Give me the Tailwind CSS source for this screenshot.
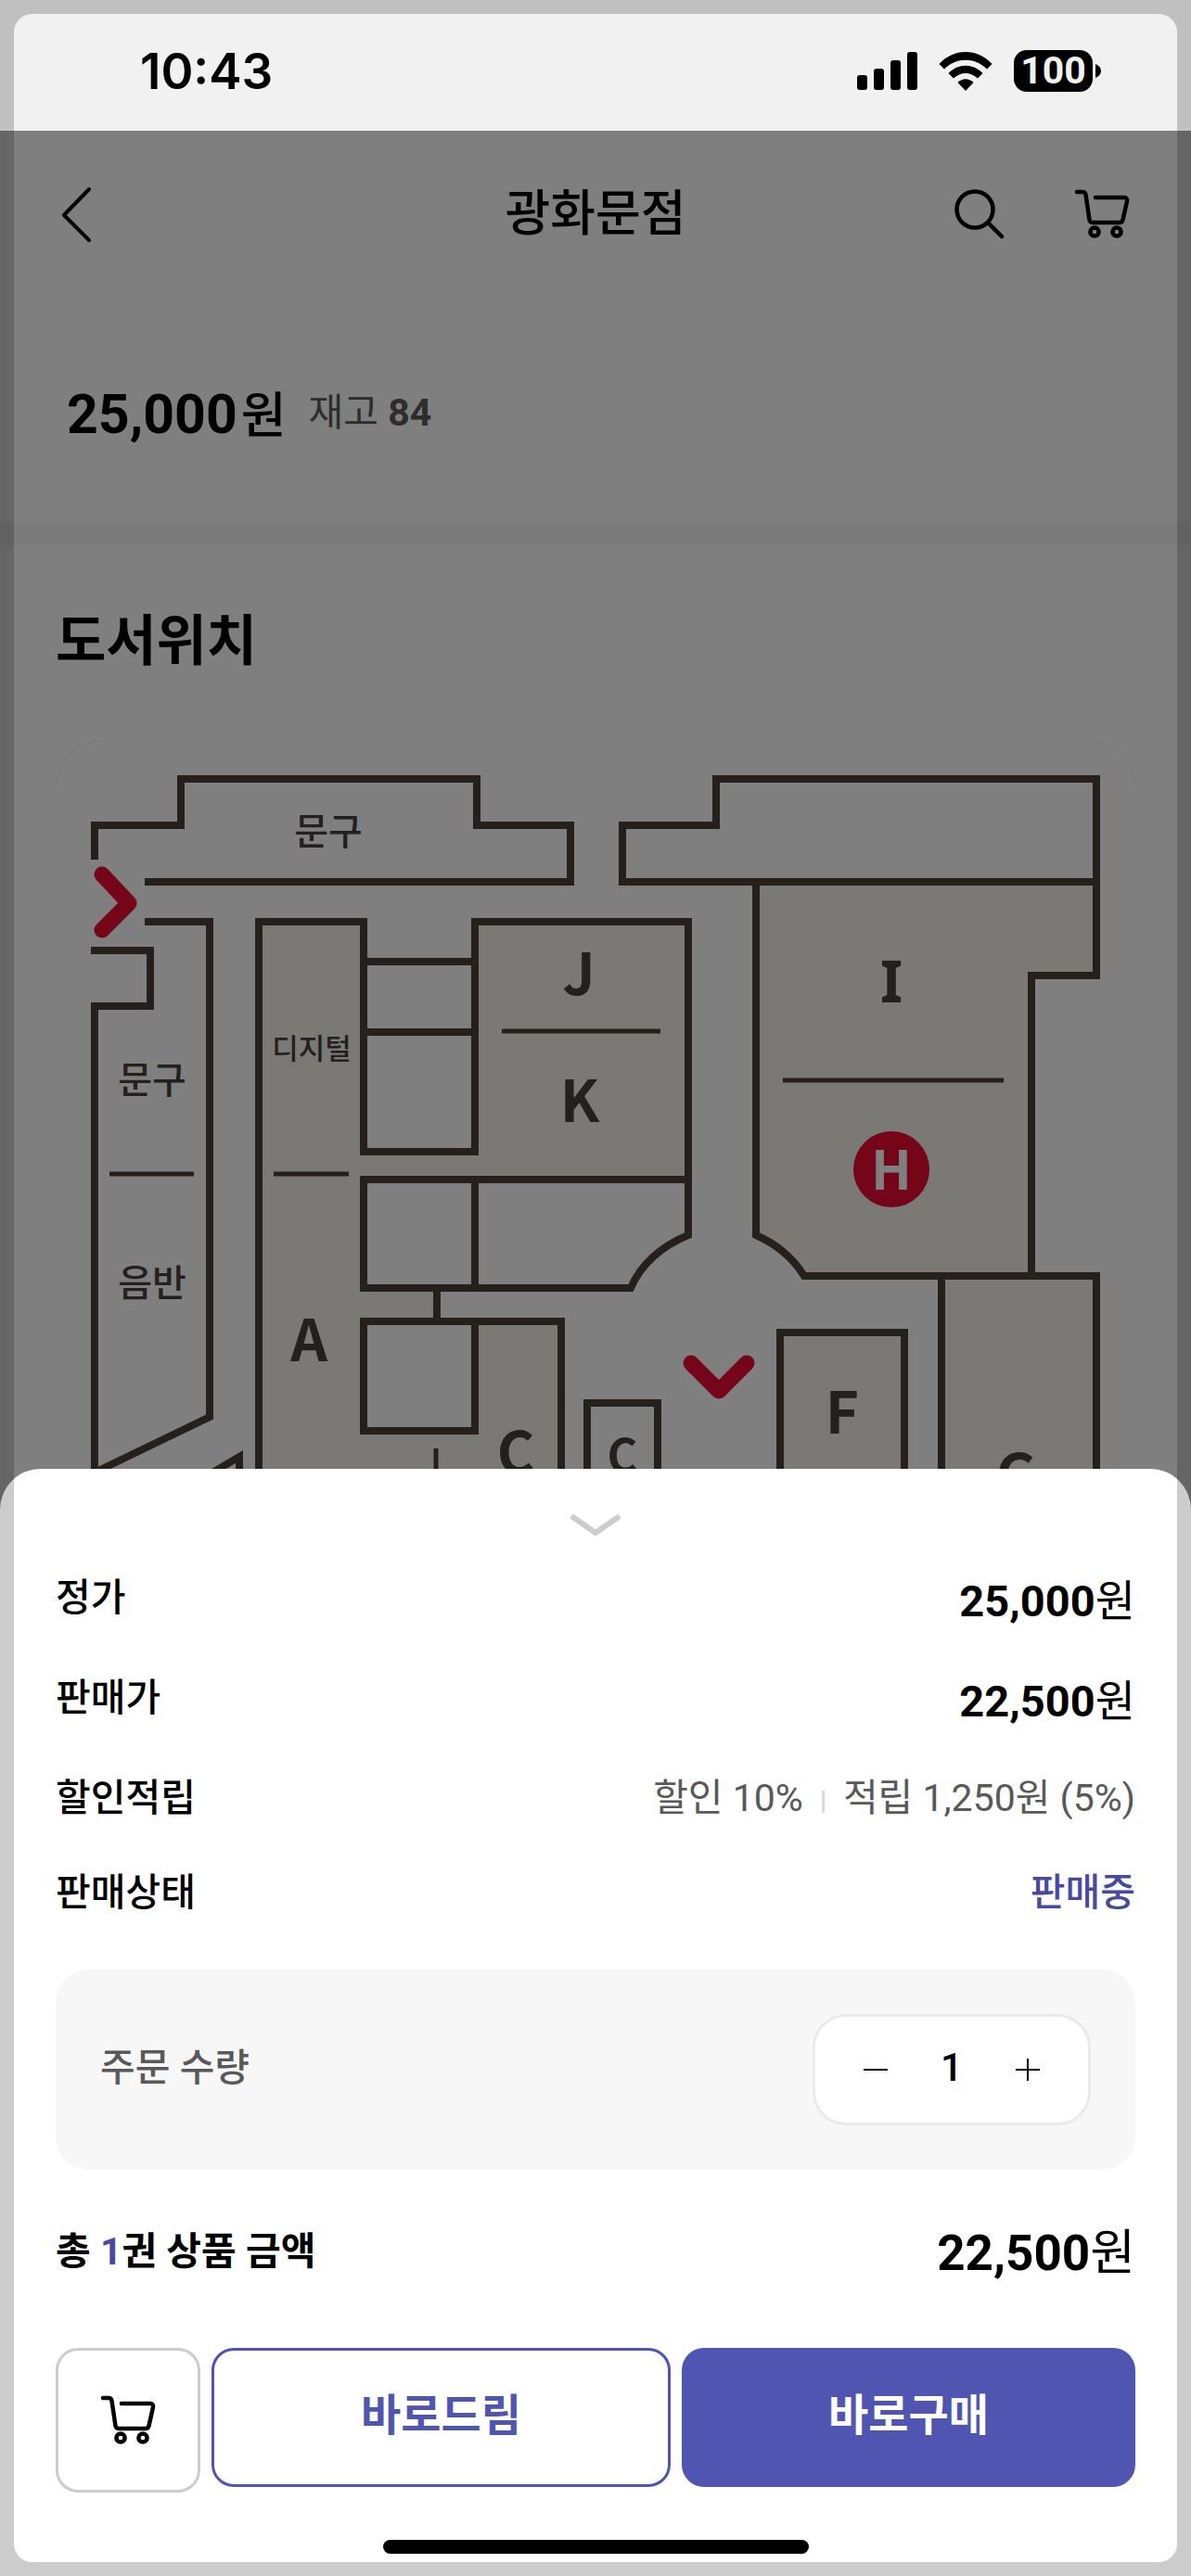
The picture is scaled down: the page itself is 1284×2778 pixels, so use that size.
<!DOCTYPE html>
<html lang="ko">
<head>
    <meta charset="UTF-8">
    <meta name="viewport" content="width=device-width, initial-scale=1.0">
    <title>광화문점</title>
    <!-- Tailwind CSS -->
    <script src="https://cdn.jsdelivr.net/npm/@tailwindcss/browser@4"></script>
</head>
<body class="relative flex h-screen flex-col overflow-hidden bg-white font-['Roboto','Noto_Sans_CJK_KR',sans-serif] text-black">
    <!-- Status Bar -->
    <div class="relative z-20 flex h-[141px] shrink-0 items-center justify-between bg-[#f1f1f1] pt-3 pr-[97px] pl-[151px]">
        <span class="font-['Inter',sans-serif] text-[53px] leading-[60px] font-semibold">10:43</span>
        <div class="flex items-center gap-[23px]">
            <svg class="h-[42px] w-[65px]" viewBox="0 0 65 42" aria-hidden="true">
                <rect x="0" y="25" width="11" height="16" rx="3"/>
                <rect x="18" y="18" width="11" height="23" rx="3"/>
                <rect x="36" y="9" width="11" height="32" rx="3"/>
                <rect x="54" y="0" width="11" height="41" rx="3"/>
            </svg>
            <svg class="h-[42px] w-[58px]" viewBox="0 0 58 42" aria-hidden="true">
                <path d="M0.5 13C16.500 -4.300 41.500 -4.300 57.500 13L52 18.500C39 5.500 19 5.500 6 18.500Z"/>
                <path d="M10.500 23C21 12 37 12 47.500 23L42 28.500C34.500 21 23.500 21 16 28.500Z"/>
                <path d="M20.500 33C25.500 28 32.500 28 37.500 33L29 42Z"/>
            </svg>
            <div class="flex items-center gap-[3px]">
                <span class="flex h-[45px] w-[85px] items-center justify-center rounded-[14px] bg-black text-[41px] leading-[45px] font-bold text-[#f1f1f1]">100</span>
                <svg class="h-[15px] w-[6px]" viewBox="0 0 6 15" aria-hidden="true">
                    <path d="M0 0C8 3 8 12 0 15Z"/>
                </svg>
            </div>
        </div>
    </div>

    <!-- Header -->
    <header class="grid h-[180px] shrink-0 grid-cols-[1fr_auto_1fr] items-center px-[60px]">
        <a href="#" aria-label="뒤로" class="justify-self-start px-[6px]">
            <svg class="h-[60px] w-[32px]" viewBox="0 0 32 60" fill="none" stroke="currentColor" stroke-width="4" stroke-linecap="round" stroke-linejoin="round" aria-hidden="true">
                <path d="M30 3L3 31L30 58"/>
            </svg>
        </a>
        <h1 class="text-[53px] leading-[60px] font-medium">광화문점</h1>
        <div class="flex items-center gap-[75px] justify-self-end pr-[6px]">
            <a href="#" aria-label="검색">
                <svg class="h-[56px] w-[54px]" viewBox="0 0 54 56" fill="none" stroke="currentColor" stroke-width="4.500" stroke-linecap="round" aria-hidden="true">
                    <circle cx="22" cy="23" r="19.500"/>
                    <path d="M37 38L51 52"/>
                </svg>
            </a>
            <a href="#" aria-label="장바구니">
                <svg class="h-[56px] w-[60px]" viewBox="0 0 60 56" fill="none" stroke="currentColor" stroke-width="4.500" stroke-linecap="round" stroke-linejoin="round" aria-hidden="true">
                    <path d="M3 4H9Q12 4 12.500 7L16.500 34Q17 37 20 37H49Q52 37 52.500 34L57 14Q57.500 10 54 10H23"/>
                    <circle cx="22" cy="47" r="4.600"/>
                    <circle cx="46" cy="47" r="4.600"/>
                </svg>
            </a>
        </div>
    </header>

    <!-- Price and Stock -->
    <section class="flex h-[243px] shrink-0 items-start gap-6 px-[72px] pt-[90px]">
        <p class="flex items-baseline gap-1 leading-[72px]">
            <strong class="text-[59px] font-bold">25,000</strong>
            <span class="text-[53px] font-medium">원</span>
        </p>
        <p class="text-[41px] leading-[68px] text-[#5a5a5a]">재고 <b class="font-bold">84</b></p>
    </section>
    <div class="h-6 shrink-0 bg-[#f6f6f6]"></div>

    <!-- Store Map -->
    <section class="px-[60px] pt-[66px]">
        <h2 class="text-[59px] leading-[76px] font-bold">도서위치</h2>
        <svg class="mt-[68px] block w-full" viewBox="60 798 1164 960" fill="none" stroke="#4a4038" stroke-width="8" role="img" aria-label="매장 지도">
            <!-- card corners -->
            <path d="M61 847A48 48 0 0 1 109 799M1175 799A48 48 0 0 1 1223 847" stroke="#eee" stroke-width="1"/>
            <!-- shaded zones -->
            <g fill="#f5f3ed" stroke="none">
                <path d="M279 994H392V1242H512V994H742V1272H392V1389H471V1425H605V1760H279Z"/>
                <path d="M815 951H1182V1052H1112V1376H867Q849 1345 815 1332Z"/>
                <path d="M1015 1376H1182V1760H1015Z"/>
                <path d="M841 1437H975V1760H841Z"/>
            </g>
            <path d="M392 1425H512V1543H392Z" fill="#fff"/>
            <!-- walls -->
            <path d="M102 927V890H195V840H514V890H615V951H156"/>
            <path d="M156 994H226V1528L102 1588"/>
            <path d="M98 1025H162V1085H102V1760"/>
            <path d="M226 1590L258 1571V1700"/>
            <path d="M279 1760V994H392V1242H512V994H742V1332C712 1344 690 1365 680 1389H392V1272H742"/>
            <path d="M392 1037H512M392 1113H512M512 1272V1389M471 1389V1425"/>
            <path d="M512 1425V1543H392V1425H605V1760"/>
            <path d="M633 1760V1513H709V1760"/>
            <path d="M815 951V1332C838 1342 855 1357 867 1376H1182V1760"/>
            <path d="M1182 951H671V890H772V840H1182V1052H1112V1376"/>
            <path d="M1015 1376V1760M841 1760V1437H975V1760"/>
            <!-- dividers -->
            <path d="M118 1266H209M295 1266H376M541 1112H712M844 1165H1082M470 1562V1700" stroke-width="5"/>
            <!-- entrances -->
            <path d="M110 943L139 974L110 1003M745 1470L775 1500L805 1470" stroke="#ea0b33" stroke-width="17" stroke-linecap="round" stroke-linejoin="round"/>
            <circle cx="961" cy="1261" r="41" fill="#ea0b33" stroke="none"/>
            <g fill="#46403a" stroke="none" text-anchor="middle" class="font-['Noto_Sans_CJK_KR',sans-serif]">
                <g font-size="40" font-weight="500">
                    <text x="354" y="911">문구</text>
                    <text x="164" y="1179">문구</text>
                    <text x="164" y="1398">음반</text>
                </g>
                <text x="336" y="1142" font-size="31" font-weight="500">디지털</text>
                <g font-size="62" font-weight="700">
                    <text x="624" y="1073">J</text>
                    <text x="625" y="1210">K</text>
                    <text x="333" y="1468">A</text>
                    <text x="556" y="1589">C</text>
                    <text x="908" y="1546">F</text>
                    <text x="1096" y="1613">G</text>
                    <text x="961" y="1081" class="font-['Noto_Sans',sans-serif]">I</text>
                </g>
                <text x="671" y="1588" font-size="50" font-weight="700">C</text>
                <text x="961" y="1283" font-size="58" font-weight="700" fill="#fff">H</text>
            </g>
        </svg>
    </section>

    <!-- Dimmed Backdrop -->
    <div class="absolute inset-0 z-10 bg-black/50"></div>

    <!-- Order Sheet -->
    <div class="absolute inset-x-0 bottom-0 z-20 rounded-t-[44px] bg-white px-[60px] pt-[46px] pb-6">
        <button type="button" aria-label="닫기" class="mx-auto block">
            <svg class="h-[28px] w-[56px]" viewBox="0 0 56 28" fill="none" stroke="#ccc" stroke-width="6" aria-hidden="true">
                <path d="M2 5L28 23L54 5"/>
            </svg>
        </button>

        <dl class="mt-[35px] text-[41px] leading-[60px]">
            <div class="flex h-[108px] justify-between">
                <dt class="font-medium">정가</dt>
                <dd class="text-[47px] leading-[68px]"><b class="font-bold">25,000</b>원</dd>
            </div>
            <div class="flex h-[108px] justify-between">
                <dt class="font-medium">판매가</dt>
                <dd class="text-[47px] leading-[68px]"><b class="font-bold">22,500</b>원</dd>
            </div>
            <div class="flex h-[102px] justify-between">
                <dt class="font-medium">할인적립</dt>
                <dd class="flex h-[60px] items-center gap-5 text-[#595959]">
                    <span>할인 10%</span>
                    <span class="mt-2 h-6 w-[3px] bg-[#d9d9d9]"></span>
                    <span>적립 1,250원 (5%)</span>
                </dd>
            </div>
            <div class="flex justify-between">
                <dt class="font-medium">판매상태</dt>
                <dd class="font-medium text-[#484b9b]">판매중</dd>
            </div>
        </dl>

        <!-- Quantity -->
        <div class="mt-[53px] flex items-center justify-between rounded-[36px] bg-[#f7f7f7] p-12">
            <label for="quantity" class="pb-1 text-[41px] leading-[60px] font-medium text-[#595959]">주문 수량</label>
            <div class="flex h-[120px] w-[300px] items-center justify-between rounded-[36px] border-[3px] border-[#eaeaea] bg-white px-[52px]">
                <button type="button" aria-label="수량 줄이기">
                    <svg class="size-[26px]" viewBox="0 0 26 26" stroke="currentColor" stroke-width="2" aria-hidden="true"><path d="M0 13H26"/></svg>
                </button>
                <input id="quantity" type="text" inputmode="numeric" value="1" class="w-[80px] pb-1 text-center text-[42px] leading-[60px] font-medium">
                <button type="button" aria-label="수량 늘리기">
                    <svg class="size-[26px]" viewBox="0 0 26 26" stroke="currentColor" stroke-width="2" aria-hidden="true"><path d="M0 13H26M13 1V25"/></svg>
                </button>
            </div>
        </div>

        <!-- Total -->
        <div class="mt-[54px] flex items-start justify-between">
            <span class="text-[41px] leading-[68px] font-bold">총 <span class="text-[#484b9b]">1</span>권 상품 금액</span>
            <span class="text-[53px] leading-[72px]"><b class="font-bold">22,500</b>원</span>
        </div>

        <!-- Actions -->
        <div class="mt-[66px] flex items-start gap-3">
            <button type="button" aria-label="장바구니 담기" class="flex size-[156px] shrink-0 items-center justify-center rounded-3xl border-[3px] border-[#ccc]">
                <svg class="h-[56px] w-[60px]" viewBox="0 0 60 56" fill="none" stroke="currentColor" stroke-width="4.500" stroke-linecap="round" stroke-linejoin="round" aria-hidden="true">
                    <path d="M3 4H9Q12 4 12.500 7L16.500 34Q17 37 20 37H49Q52 37 52.500 34L57 14Q57.500 10 54 10H23"/>
                    <circle cx="22" cy="47" r="4.600"/>
                    <circle cx="46" cy="47" r="4.600"/>
                </svg>
            </button>
            <button type="button" class="h-[150px] flex-1 rounded-3xl border-[3px] border-[#5055b1] pb-1 text-[47px] leading-[60px] font-bold text-[#5055b1]">바로드림</button>
            <button type="button" class="h-[150px] flex-1 rounded-3xl bg-[#5055b1] pb-1 text-[47px] leading-[60px] font-bold text-white">바로구매</button>
        </div>

        <!-- Home Indicator -->
        <div class="mx-auto mt-[51px] h-[15px] w-[459px] rounded-full bg-black"></div>
    </div>

    <!-- Screen Frame -->
    <div class="pointer-events-none absolute inset-[15px] z-30 rounded-[20px] shadow-[0_0_0_60px_rgba(0,0,0,0.2)]"></div>
</body>
</html>
